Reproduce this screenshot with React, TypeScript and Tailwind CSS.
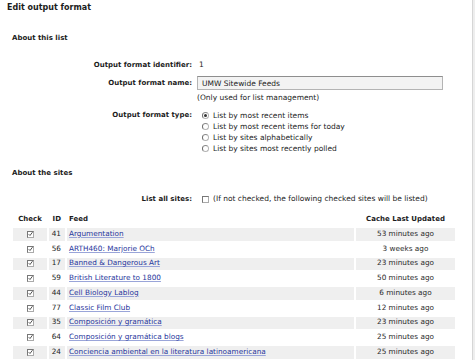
import React from "react";

const feeds = [
  { id: 41, name: "Argumentation", updated: "53 minutes ago" },
  { id: 56, name: "ARTH460: Marjorie OCh", updated: "3 weeks ago" },
  { id: 17, name: "Banned & Dangerous Art", updated: "23 minutes ago" },
  { id: 59, name: "British Literature to 1800", updated: "50 minutes ago" },
  { id: 44, name: "Cell Biology Lablog", updated: "6 minutes ago" },
  { id: 77, name: "Classic Film Club", updated: "12 minutes ago" },
  { id: 35, name: "Composición y gramática", updated: "23 minutes ago" },
  { id: 64, name: "Composición y gramática blogs", updated: "25 minutes ago" },
  { id: 24, name: "Conciencia ambiental en la literatura latinoamericana", updated: "25 minutes ago" },
];

const types = [
  "List by most recent items",
  "List by most recent items for today",
  "List by sites alphabetically",
  "List by sites most recently polled",
];

function Radio({ checked }: { checked?: boolean }) {
  return (
    <span className="inline-flex w-[7px] h-[7px] rounded-full border border-[#b4b4b4] border-l-[#6a6a6a] border-t-[#8a8a8a] bg-white items-center justify-center shrink-0">
      {checked && <span className="w-[3px] h-[3px] rounded-full bg-[#333]" />}
    </span>
  );
}

function Checkbox({ checked }: { checked?: boolean }) {
  return (
    <span className="inline-flex w-[7px] h-[7px] border border-[#aaa] border-l-[#777] border-t-[#777] bg-white items-center justify-center shrink-0">
      {checked && (
        <svg width="6" height="6" viewBox="0 0 6 6" className="-mt-[1px]">
          <path d="M0.8 3.2 L2.4 4.8 L5.4 0.8" stroke="#333" strokeWidth="1" fill="none" />
        </svg>
      )}
    </span>
  );
}

function FieldRow({ label, className, children }: { label?: string; className?: string; children: React.ReactNode }) {
  return (
    <div className={`flex items-center ${className ?? ""}`}>
      <div className="w-[192px] shrink-0 text-right font-bold text-[7px]">{label}</div>
      <div className="ml-[5px] flex items-center min-w-0">{children}</div>
    </div>
  );
}

export default function App() {
  return (
    <div className="w-[475px] h-[360px] overflow-hidden bg-white flex font-['DejaVu_Sans',sans-serif] text-[7.5px] text-[#1c1c1c]">
      <div className="w-[472px] shrink-0">
        <div className="pl-[7px] pt-[1px] h-[15px] leading-[14px] text-[8px] font-bold">Edit output format</div>

        <div className="mt-[16px] pl-[12px] h-[14px] leading-[14px] text-[7px] font-bold">About this list</div>

        <FieldRow label="Output format identifier:" className="mt-[13px] h-[14px]">
          <span className="pl-[2px]">1</span>
        </FieldRow>

        <FieldRow label="Output format name:" className="mt-[4px] h-[14px]">
          <input
            readOnly
            defaultValue="UMW Sitewide Feeds"
            className="w-[246px] h-[14px] border border-[#b4b4b4] border-t-[#8e8e8e] bg-[#f3f3f3] pl-[4px] text-[7.5px] outline-none"
          />
        </FieldRow>

        <FieldRow className="mt-[1px] h-[13px]">
          <span>(Only used for list management)</span>
        </FieldRow>

        <div className="mt-[6px] flex">
          <div className="w-[192px] shrink-0 h-[11px] leading-[11px] text-right font-bold text-[7px]">Output format type:</div>
          <div className="ml-[10px] flex flex-col">
            {types.map((t, i) => (
              <label key={t} className="h-[11px] flex items-center gap-[4px]">
                <Radio checked={i === 0} />
                <span>{t}</span>
              </label>
            ))}
          </div>
        </div>

        <div className="mt-[12px] pl-[12px] h-[14px] leading-[14px] text-[7px] font-bold">About the sites</div>

        <div className="mt-[12px] flex items-center h-[14px]">
          <div className="w-[192px] shrink-0 text-right font-bold text-[7px]">List all sites:</div>
          <div className="ml-[10px] flex items-center gap-[4px]">
            <Checkbox />
            <span>(If not checked, the following checked sites will be listed)</span>
          </div>
        </div>

        <div className="mt-[7px] ml-[13px] grid grid-cols-[34px_16px_287px_99px] gap-x-[2px] gap-y-[2px] text-[7.3px]">
          <div className="h-[13px] flex items-center justify-center font-bold text-[7px]">Check</div>
          <div className="h-[13px] flex items-center justify-end pr-[4px] font-bold text-[7px]">ID</div>
          <div className="h-[13px] flex items-center pl-[2px] font-bold text-[7px]">Feed</div>
          <div className="h-[13px] flex items-center justify-center font-bold text-[7px]">Cache Last Updated</div>

          {feeds.map((f, i) => {
            const bg = i % 2 === 0 ? "bg-[#efefef]" : "bg-white";
            return (
              <React.Fragment key={f.id}>
                <div className={`h-[12.75px] flex items-center justify-center ${bg}`}>
                  <Checkbox checked />
                </div>
                <div className={`h-[12.75px] flex items-center justify-end pr-[4px] ${bg}`}>{f.id}</div>
                <div className={`h-[12.75px] flex items-center pl-[2px] whitespace-nowrap ${bg}`}>
                  <a href="#" className="text-[#26359c] underline decoration-[#9aa5d9] underline-offset-[1px]">
                    {f.name}
                  </a>
                </div>
                <div className={`h-[12.75px] flex items-center justify-center text-[#2a2a2a] ${bg}`}>{f.updated}</div>
              </React.Fragment>
            );
          })}
        </div>
      </div>
      <div className="flex-1 border-l border-[#d6d6d6] bg-[#eeeeee]" />
    </div>
  );
}
